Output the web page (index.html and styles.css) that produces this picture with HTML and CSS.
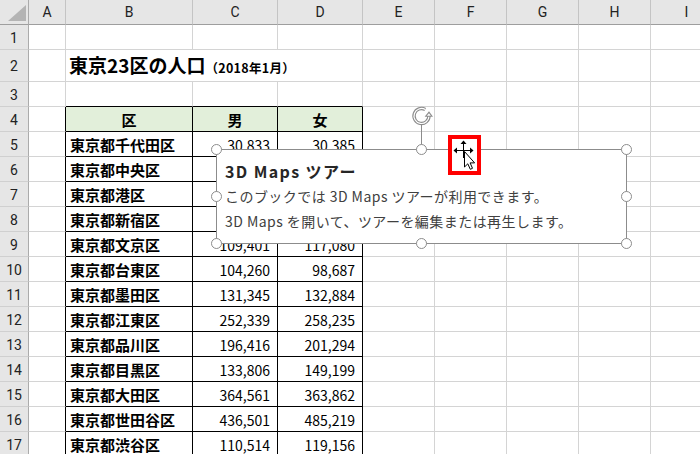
FILE: index.html
```html
<!DOCTYPE html>
<html lang="ja">
<head>
<meta charset="utf-8">
<title>東京23区の人口</title>
<link rel="stylesheet" href="styles.css">
</head>
<body>
<div class="sheet">
  <div class="row hdr"><div class="corner"></div><div>A</div><div>B</div><div>C</div><div>D</div><div>E</div><div>F</div><div>G</div><div>H</div><div>I</div></div>
  <div class="row"><div class="rh">1</div><div></div><div></div><div></div><div></div><div></div><div></div><div></div><div></div><div></div></div>
  <div class="row tall"><div class="rh">2</div><div></div><div class="title"><span>東京23区の人口<span class="sub">（2018年1月）</span></span></div><div></div><div></div><div></div><div></div><div></div></div>
  <div class="row r3"><div class="rh">3</div><div></div><div></div><div></div><div></div><div></div><div></div><div></div><div></div><div></div></div>
  <div class="row tr"><div class="rh">4</div><div></div><div class="th">区</div><div class="th">男</div><div class="th">女</div><div></div><div></div><div></div><div></div><div></div></div>
  <div class="row tr"><div class="rh">5</div><div></div><div class="nm">東京都千代田区</div><div class="num">30,833</div><div class="num">30,385</div><div></div><div></div><div></div><div></div><div></div></div>
  <div class="row tr"><div class="rh">6</div><div></div><div class="nm">東京都中央区</div><div class="num">74,838</div><div class="num">80,998</div><div></div><div></div><div></div><div></div><div></div></div>
  <div class="row tr"><div class="rh">7</div><div></div><div class="nm">東京都港区</div><div class="num">121,055</div><div class="num">135,955</div><div></div><div></div><div></div><div></div><div></div></div>
  <div class="row tr"><div class="rh">8</div><div></div><div class="nm">東京都新宿区</div><div class="num">173,047</div><div class="num">169,583</div><div></div><div></div><div></div><div></div><div></div></div>
  <div class="row tr"><div class="rh">9</div><div></div><div class="nm">東京都文京区</div><div class="num">109,401</div><div class="num">117,080</div><div></div><div></div><div></div><div></div><div></div></div>
  <div class="row tr"><div class="rh">10</div><div></div><div class="nm">東京都台東区</div><div class="num">104,260</div><div class="num">98,687</div><div></div><div></div><div></div><div></div><div></div></div>
  <div class="row tr"><div class="rh">11</div><div></div><div class="nm">東京都墨田区</div><div class="num">131,345</div><div class="num">132,884</div><div></div><div></div><div></div><div></div><div></div></div>
  <div class="row tr"><div class="rh">12</div><div></div><div class="nm">東京都江東区</div><div class="num">252,339</div><div class="num">258,235</div><div></div><div></div><div></div><div></div><div></div></div>
  <div class="row tr"><div class="rh">13</div><div></div><div class="nm">東京都品川区</div><div class="num">196,416</div><div class="num">201,294</div><div></div><div></div><div></div><div></div><div></div></div>
  <div class="row tr"><div class="rh">14</div><div></div><div class="nm">東京都目黒区</div><div class="num">133,806</div><div class="num">149,199</div><div></div><div></div><div></div><div></div><div></div></div>
  <div class="row tr"><div class="rh">15</div><div></div><div class="nm">東京都大田区</div><div class="num">364,561</div><div class="num">363,862</div><div></div><div></div><div></div><div></div><div></div></div>
  <div class="row tr"><div class="rh">16</div><div></div><div class="nm">東京都世田谷区</div><div class="num">436,501</div><div class="num">485,219</div><div></div><div></div><div></div><div></div><div></div></div>
  <div class="row tr"><div class="rh">17</div><div></div><div class="nm">東京都渋谷区</div><div class="num">110,514</div><div class="num">119,156</div><div></div><div></div><div></div><div></div><div></div></div>
</div>

<div class="shape">
  <svg class="rot" width="23" height="45" viewBox="0 0 23 45">
    <line x1="11.5" y1="20" x2="11.5" y2="40" stroke="#8c8c8c" stroke-width="1"/>
    <path d="M15.25 4.5 A7.5 7.5 0 1 0 19 11" fill="none" stroke="#8c8c8c" stroke-width="3.4"/>
    <path d="M15.25 4.5 A7.5 7.5 0 1 0 19 11" fill="none" stroke="#fff" stroke-width="1.2"/>
    <polygon points="14.6,11.8 23,11.8 19,6.2" fill="#8c8c8c"/>
    <polygon points="16.8,10.8 20.9,10.8 19,8.3" fill="#fff"/>
  </svg>
  <span class="hd" style="left:-6px;top:-6px"></span>
  <span class="hd" style="left:199px;top:-6px"></span>
  <span class="hd" style="left:404px;top:-6px"></span>
  <span class="hd" style="left:-6px;top:41px"></span>
  <span class="hd" style="left:404px;top:41px"></span>
  <span class="hd" style="left:-6px;top:88px"></span>
  <span class="hd" style="left:199px;top:88px"></span>
  <span class="hd" style="left:404px;top:88px"></span>
  <div class="st">3D Maps ツアー</div>
  <div class="sl">このブックでは 3D Maps ツアーが利用できます。</div>
  <div class="sl">3D Maps を開いて、ツアーを編集または再生します。</div>
</div>

<div class="cursor">
  <svg width="25" height="32" viewBox="0 0 25 32">
    <path d="M4 11.5H19M11.5 4V19" stroke="#000" stroke-width="1" fill="none"/>
    <polygon points="1.5,11.5 5,8.5 5,14.5" fill="#000"/>
    <polygon points="21.5,11.5 18,8.5 18,14.5" fill="#000"/>
    <polygon points="11.5,1.5 8.5,5 14.5,5" fill="#000"/>
    <polygon points="12.5,12.5 12.5,28 15.8,24.8 18.3,30.3 20.5,29.3 18.1,23.9 22.6,23.9" fill="#fff" stroke="#000" stroke-width="1" stroke-linejoin="miter"/>
  </svg>
</div>
</body>
</html>
```

FILE: styles.css
```css
* { box-sizing: border-box; margin: 0; padding: 0; }
html, body { width: 700px; height: 454px; overflow: hidden; background: #fff; }
body { position: relative; font-family: "Noto Sans CJK JP", "Noto Sans", sans-serif; color: #000; }

.sheet { width: 723px; }
.row {
  display: grid;
  grid-template-columns: 29px 37px 127px 85px 85px 72px 72px 72px 72px 72px;
  height: 25px;
}
.row.tall { height: 32px; }
.row > div {
  border-right: 1px solid #d4d4d4;
  border-bottom: 1px solid #d4d4d4;
  display: flex;
  align-items: center;
  white-space: nowrap;
  font-size: 14px;
  line-height: 1;
}

/* headers */
.hdr > div {
  background: #e6e6e6;
  border-right-color: #c4c4c4;
  border-bottom-color: #9e9e9e;
  justify-content: center;
  font-family: Roboto, "Noto Sans", sans-serif;
  font-size: 14px;
  color: #222;
}
.hdr > .corner {
  border-right-color: #ababab;
  justify-content: flex-end;
  align-items: flex-end;
  padding: 0 2px 3px 0;
}
.corner::after {
  content: "";
  width: 18px;
  height: 16px;
  background: #b4b4b4;
  clip-path: polygon(100% 0, 100% 100%, 0 100%);
}
.row > .rh {
  background: #e6e6e6;
  border-right-color: #ababab;
  border-bottom-color: #d0d0d0;
  justify-content: center;
  font-family: Roboto, "Noto Sans", sans-serif;
  font-size: 14px;
  color: #222;
  padding-top: 1px;
}

/* title */
.row > .title {
  grid-column: span 3;
  padding-left: 3px;
  font-weight: 700;
  font-size: 19px;
  padding-bottom: 2px;
}
.sub { font-size: 12.5px; font-weight: 700; margin-left: 0; letter-spacing: 0.3px; }

/* table borders */
.r3 > div:nth-child(n+3):nth-child(-n+5) { border-bottom-color: #000; }
.tr > div:nth-child(2) { border-right-color: #000; }
.tr > div:nth-child(n+3):nth-child(-n+5) { border-right-color: #000; border-bottom-color: #000; }

.row > .th { background: #e2efda; justify-content: center; font-weight: 700; font-size: 15px; }
.row > .nm { font-weight: 700; font-size: 15px; padding-left: 4px; padding-top: 1px; }
.row > .num { justify-content: flex-end; padding-right: 7px; padding-top: 1px; }

/* 3D Maps shape */
.shape {
  position: absolute;
  left: 216px;
  top: 149px;
  width: 411px;
  height: 95px;
  border: 1px solid #8c8c8c;
  background: #fff;
  padding: 9px 0 0 8px;
  z-index: 2;
}
.hd {
  position: absolute;
  width: 11px;
  height: 11px;
  border-radius: 50%;
  border: 1.5px solid #8c8c8c;
  background: #fff;
}
.rot { position: absolute; left: 193px; top: -45px; }
.st { font-size: 16px; font-weight: 700; color: #262626; line-height: 25px; height: 25px; letter-spacing: 1.4px; }
.sl { font-size: 14px; color: #404040; line-height: 25px; height: 25px; letter-spacing: 0.45px; }

.cursor {
  position: absolute;
  left: 448px;
  top: 135px;
  width: 33px;
  height: 40px;
  border: 4px solid #ff0000;
  background: #fff;
  z-index: 3;
}
.cursor svg { display: block; }
```
